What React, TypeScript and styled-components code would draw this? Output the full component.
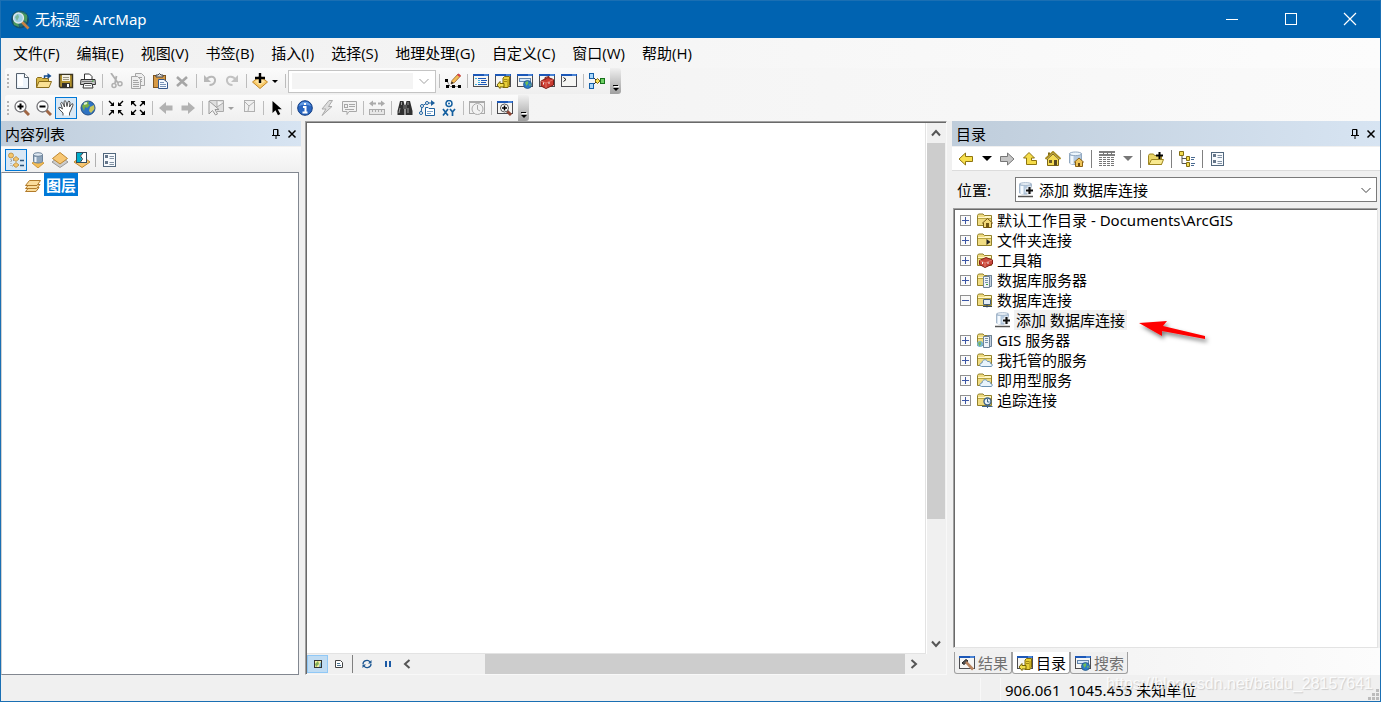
import React from "react";
import styled, { createGlobalStyle, css } from "styled-components";

const GlobalStyle = createGlobalStyle`
  * { box-sizing: border-box; }
  html, body { margin: 0; padding: 0; }
  body {
    font-family: "Noto Sans", "Noto Sans CJK SC", sans-serif;
    font-size: 15px;
    line-height: 20px;
    color: #000;
    background: #f0f0f0;
  }
  button, select { font: inherit; color: inherit; }
`;

/* ---------- icon artwork ---------- */

const folderBase = (
  <>
    <path d="M.5 13.5V3.5L1.5 2H6L7.5 3.5H14.5V13.5Z" fill="#f0dc82" stroke="#92802a" />
    <path d="M1 5.5H14M8 4.5H14" stroke="#fff6c4" />
    <path d="M1 6.5H14" stroke="#b8a440" />
  </>
);

const windowBase = (
  <>
    <rect x=".5" y="1.5" width="15" height="12" fill="#f6f6f4" stroke="#4c4c50" />
    <rect x="0" y="1" width="16" height="2" fill="#1c58b8" />
    <path d="M11 2H15" stroke="#7ab0f0" />
  </>
);

const icons = {
  newFile: (
    <>
      <path d="M2.5.5H10.5L14.5 4.5V15.5H2.5Z" fill="#eef5fc" stroke="#55606c" />
      <path d="M4 2H9V13H4Z" fill="#fff" />
      <path d="M10.5.5V4.5H14.5" fill="#fff" stroke="#55606c" />
    </>
  ),
  open: (
    <>
      <path d="M.5 14.5V5.5L1.5 4.5H5.5L6.5 5.5H12.5V8" fill="#d9b94a" stroke="#8a6d1b" />
      <path d="M.5 14.5L3 8.5H15.5L13 14.5Z" fill="#fbe295" stroke="#8a6d1b" />
      <path d="M8.5 5V3H12" fill="none" stroke="#144d91" strokeWidth="1.4" />
      <path d="M11.500 0L15.5 3L11.500 6Z" fill="#144d91" />
    </>
  ),
  save: (
    <>
      <path d="M1.5 1.5H14.5V14.5H2.5L1.5 13.5Z" fill="#b0912e" stroke="#3a3423" strokeWidth="1.4" />
      <rect x="4" y="2" width="8" height="6" fill="#f3efe2" />
      <path d="M5 4.5H11M5 6.5H11" stroke="#9b9683" />
      <rect x="4" y="10" width="8" height="5" fill="#34312b" />
      <rect x="9" y="11" width="2" height="3" fill="#fff" />
    </>
  ),
  print: (
    <>
      <path d="M4.500 6V1H9.500L12 3.500V6" fill="#fff" stroke="#333" />
      <path d="M1 6.500H15L15.500 11.500H.5Z" fill="#c9c9c9" stroke="#333" />
      <path d="M2 8.500H13" stroke="#777" />
      <rect x="12" y="7.500" width="2" height="1" fill="#3c9f3c" />
      <path d="M4 10.500H12L13 15H3Z" fill="#fff" stroke="#333" />
      <path d="M5 12.500H11" stroke="#888" />
    </>
  ),
  cut: (
    <g fill="none" stroke="#b0b0b0">
      <path d="M3 0L10 10M8.500 3L7 10" strokeWidth="1.8" />
      <circle cx="6" cy="12.500" r="2" strokeWidth="1.500" />
      <circle cx="12" cy="10.800" r="2" strokeWidth="1.500" />
    </g>
  ),
  copy: (
    <g fill="#eee" stroke="#a5a5a5">
      <path d="M5.500.5H11.500L14.500 3.500V12.500H5.500Z" />
      <path d="M7.500 4.500H12M7.500 6.500H12M7.500 8.500H12" />
      <path d="M1.500 3.500H7.500L10.500 6.500V15.500H1.500Z" />
      <path d="M3 7.500H8M3 9.500H9M3 11.500H9M3 13.500H9" />
    </g>
  ),
  paste: (
    <>
      <rect x="1.500" y="2.500" width="12" height="12" fill="#d79a45" stroke="#7d5420" />
      <path d="M4 4V2H6L7.500.5L9 2H11V4Z" fill="#ddd" stroke="#444" />
      <path d="M6.500 6.500H12L15.500 9.500V15.500H6.500Z" fill="#f6faff" stroke="#37588a" />
      <path d="M8 9.500H12M8 11.500H14M8 13.500H14" stroke="#7a94b8" />
    </>
  ),
  remove: <path d="M3 4L13 13M13 4L3 13" stroke="#a6a6a6" strokeWidth="2.600" />,
  undo: (
    <>
      <path d="M4 7C7 2 14 3 13 8C12.500 10.500 10.500 12 7.500 12" fill="none" stroke="#b8b8b8" strokeWidth="2" />
      <path d="M2 2V9H9Z" fill="#b8b8b8" />
    </>
  ),
  redo: (
    <>
      <path d="M12 7C9 2 2 3 3 8C3.500 10.500 5.500 12 8.500 12" fill="none" stroke="#c2c2c2" strokeWidth="2" />
      <path d="M14 2V9H7Z" fill="#c2c2c2" />
    </>
  ),
  addData: (
    <>
      <path d="M8 3L15.500 9L8 15.500L.5 9Z" fill="#f8c968" stroke="#c28828" />
      <path d="M3 8.500L8 5L13 8.500L8 12Z" fill="#fde3a2" />
      <path d="M8 0V10M3 5H13" stroke="#000" strokeWidth="2.400" />
    </>
  ),
  editor: (
    <>
      <path d="M1.500 7L5 13.500H14" fill="none" stroke="#333" strokeDasharray="1 1" />
      <path d="M0 6h3v3H0zM1 12h3v3H1zM7 12h3v3H7zM13 12h3v3h-3z" fill="#000" />
      <path d="M6 11L7 7.500L13 1L15.500 3L9.500 9.500Z" fill="#f3bd55" stroke="#94612b" strokeWidth=".8" />
      <path d="M12 2L13.500.5L16 2.500L14.500 4Z" fill="#d8414a" />
      <path d="M6 11L6.700 8.500L8.500 10Z" fill="#222" />
    </>
  ),
  contents: (
    <>
      {windowBase}
      <path d="M2 5.500H4M5 7.500H7M5 9.500H7M2 11.500H4" stroke="#3bb0e0" />
      <path d="M5 5.500H13M8 7.500H14M8 9.500H13M5 11.500H14" stroke="#1c58b8" />
    </>
  ),
  catalogWin: (
    <>
      {windowBase}
      <path d="M8 5L9.500 3.500H14.500V12L13 14.500H8Z" fill="#e8cf38" stroke="#806a08" />
      <path d="M13 6V14M9 6.500H12M9 8.500H12" stroke="#a18712" />
      <path d="M2 12L5 8.500V10.500H9V14H5V15.500Z" fill="#f2df51" stroke="#756003" />
    </>
  ),
  searchWin: (
    <>
      {windowBase}
      <rect x="2.500" y="5.500" width="11" height="3" fill="#d6e8fa" stroke="#6185ad" />
      <circle cx="10.500" cy="11.500" r="4" fill="#2a7bc8" stroke="#285780" strokeWidth=".8" />
      <path d="M8 9.500L10.500 8L11.500 10L9.500 13ZM11.500 12L13.500 10.500V13Z" fill="#70be56" />
    </>
  ),
  toolboxWin: (
    <>
      {windowBase}
      <path d="M2 8L9 4.500L14.500 6.500V12L7 15.500L2 13Z" fill="#c93b31" stroke="#7d1913" />
      <path d="M2 8L7 10L14.500 6.500M7 10V15" fill="none" stroke="#f08b7c" strokeWidth=".7" />
      <path d="M6 7V4.500L10 3.500V5" fill="none" stroke="#7d1913" />
      <path d="M4.500 9.500V11.500M10 9V11" stroke="#eee" />
    </>
  ),
  pythonWin: (
    <>
      {windowBase}
      <path d="M2.500 4.500L5 6.500L2.500 8.500" fill="none" stroke="#111" />
    </>
  ),
  model: (
    <>
      <path d="M3 3L8 8H12M3 13L8 8" fill="none" stroke="#333" />
      <rect x=".5" y=".5" width="4" height="5" fill="#a9d7fb" stroke="#145fa8" />
      <rect x=".5" y="10.500" width="4" height="5" fill="#a9d7fb" stroke="#145fa8" />
      <path d="M8.500 5.500L11 8L8.500 10.500L6 8Z" fill="#fae25a" stroke="#7f6a0e" />
      <rect x="11.500" y="5.500" width="4" height="5" fill="#6fd065" stroke="#17721a" />
    </>
  ),
  zoomIn: (
    <>
      <path d="M10 10L15 15" stroke="#a06644" strokeWidth="3" />
      <circle cx="6.500" cy="6.500" r="5.500" fill="#fff" stroke="#77777b" strokeWidth="1.300" />
      <path d="M3.500 6.500H9.500M6.500 3.500V9.500" stroke="#000" strokeWidth="2" />
    </>
  ),
  zoomOut: (
    <>
      <path d="M10 10L15 15" stroke="#a06644" strokeWidth="3" />
      <circle cx="6.500" cy="6.500" r="5.500" fill="#fff" stroke="#77777b" strokeWidth="1.300" />
      <path d="M3.500 6.500H9.500" stroke="#000" strokeWidth="2" />
    </>
  ),
  pan: (
    <path
      d="M5 15.500V13L1 9L.7 7.700L2 7.200L4.500 9L2.700 3.300L3.500 2.300L4.700 3L6.500 7L6 1.500L7 .6L8 1.500L9 6.500L10 1.700L11 1L12 2L11.500 7L13.500 4L14.700 3.700L15 5L13 10L11.500 13V15.500"
      fill="#fff"
      stroke="#3c3c3c"
      strokeWidth=".9"
    />
  ),
  globe: (
    <>
      <circle cx="8" cy="8" r="7" fill="#2e73c3" stroke="#254f83" />
      <path d="M2 6L5 2L9 1.500L8 4L10 5L7 8L5 7L4 11Z" fill="#79ad43" />
      <path d="M10 7L14 5L14.500 9L11 13L9 11Z" fill="#c9c65a" />
      <path d="M4 4L7 3" stroke="#def4d0" strokeWidth="2" />
    </>
  ),
  fixedIn: (
    <g fill="#000" stroke="#000" strokeWidth="1.400">
      <path d="M1 1L5 5M15 1L11 5M1 15L5 11M15 15L11 11" />
      <path d="M6 2V6H2ZM10 2V6H14ZM6 14V10H2ZM10 14V10H14Z" strokeWidth="0" />
    </g>
  ),
  fixedOut: (
    <g fill="#000" stroke="#000" strokeWidth="1.400">
      <path d="M2 2L6 6M14 2L10 6M2 14L6 10M14 14L10 10" />
      <path d="M1 1H5.500L1 5.500ZM15 1H10.500L15 5.500ZM1 15H5.500L1 10.500ZM15 15H10.500L15 10.500Z" strokeWidth="0" />
    </g>
  ),
  back: <path d="M1 8L8 2V5.500H14.500V10.500H8V14Z" fill="#b2b2b2" />,
  forward: <path d="M15 8L8 2V5.500H1.500V10.500H8V14Z" fill="#b2b2b2" />,
  select: (
    <>
      <path d="M1.500.5H15.500V11.500H9M9 1V7L15 3" fill="#dedede" stroke="#aaa" />
      <path d="M1 1V14L4.500 10.500L7.500 15L9.500 14L7 9.500H11Z" fill="#eee" stroke="#999" />
    </>
  ),
  clear: (
    <g fill="#f0f0f0" stroke="#b0b0b0">
      <rect x="3.500" y=".5" width="10" height="11" />
      <path d="M4 2L8 6L13 2M8 6L7 11" fill="none" />
    </g>
  ),
  pointer: <path d="M3.500 1V13L6.500 10.200L9 15.200L11.300 14L8.700 9.300H12.800Z" fill="#000" />,
  identify: (
    <>
      <circle cx="8" cy="8" r="7.300" fill="#2a66c0" stroke="#103c83" />
      <path d="M2 6C3 1 12 0 14 6C10 4 6 4 2 6Z" fill="#659de5" />
      <path d="M8 3V5M6 7H8.500V12M5.500 12.500H10.500" fill="none" stroke="#fff" strokeWidth="2" />
    </>
  ),
  bolt: <path d="M10 .5L3 9H7L3 15.500L13 6.500H9.500L13.500.5Z" fill="#ddd" stroke="#aaa" />,
  popup: (
    <g fill="#f2f2f2" stroke="#a8a8a8">
      <path d="M1.500 1.500H15.500V11.500H8L6 14.500V11.500H1.500Z" />
      <rect x="3.500" y="4.500" width="3" height="3" />
      <path d="M8 4.500H14M8 6.500H14M4 9.500H13" />
    </g>
  ),
  measure: (
    <g fill="none" stroke="#ababab">
      <path d="M2 3.500H7M9 3.500H14" strokeWidth="2" />
      <path d="M0 3.500L4 .5V6.500ZM16 3.500L12 .5V6.500Z" fill="#ababab" strokeWidth="0" />
      <rect x=".5" y="9.500" width="15" height="5" fill="#e7e7e7" />
      <path d="M3.500 10V12M6.500 10V12M9.500 10V12M12.500 10V12" />
    </g>
  ),
  find: (
    <>
      <path d="M3 1H6.500L7.500 5V15H.5V11ZM9.500 1H13L15.500 11V15H8.500V5Z" fill="#303030" />
      <path d="M3 8L2 13M11 8V13M4.500 2V5M11 2V5" stroke="#9a9a9a" />
      <rect x="6" y="5" width="4" height="4" fill="#555" />
    </>
  ),
  route: (
    <g fill="#fff" stroke="#1d609e">
      <path d="M2 13L3 6L8 3H13" fill="none" />
      <path d="M12 0L16 3L12 6Z" fill="#1d609e" strokeWidth="0" />
      <circle cx="2" cy="13" r="1.500" />
      <circle cx="3" cy="6" r="1.500" />
      <circle cx="8" cy="3" r="1.500" />
      <path d="M6.500 7.500H9L10 8.500H15.500V15.500H6.500Z" />
      <path d="M8 11.500H14M8 13.500H12" stroke="#7aa3cb" />
    </g>
  ),
  goToXY: (
    <>
      <circle cx="8" cy="3.500" r="3" fill="#fff" stroke="#145f9f" strokeWidth="1.500" />
      <circle cx="8" cy="3.500" r="1" fill="#145f9f" />
      <path d="M2 9L7 15.500M7 9L2 15.500M9 9L11.500 12L14 9M11.500 12V16" fill="none" stroke="#145f9f" strokeWidth="1.700" />
    </>
  ),
  time: (
    <g fill="#f2f2f2" stroke="#aaa">
      <rect x=".5" y="1.500" width="15" height="12" />
      <path d="M0 2H16" strokeWidth="2" />
      <circle cx="8.500" cy="9" r="5.500" />
      <path d="M8.500 5V9.500L11 11" fill="none" />
    </g>
  ),
  viewer: (
    <>
      {windowBase}
      <path d="M10 11L14 15" stroke="#8f4635" strokeWidth="3" />
      <circle cx="7.500" cy="8" r="4" fill="#fff" stroke="#555" />
      <path d="M5 8H10M7.500 5.500V10.500" stroke="#000" strokeWidth="1.500" />
    </>
  ),
  drawOrder: (
    <>
      <path d="M3 7V14H8M3 8.500H7" fill="none" stroke="#999" strokeDasharray="1 1" />
      <g fill="#f5c66c" stroke="#b98a3b" strokeWidth=".8">
        <circle cx="3" cy="3.500" r="2.500" />
        <path d="M8 4.500L11 7L8 9.500L5 7ZM8 10.500L11 13L8 15.500L5 13Z" />
      </g>
      <path d="M12 8.500H16M12 13.500H16" stroke="#2b5379" strokeWidth="1.600" />
    </>
  ),
  source: (
    <>
      <path d="M8 16L2 11L8 8L14 11Z" fill="#f3bd55" stroke="#c28a2f" strokeWidth=".8" />
      <path d="M3.500 2.500V9.500C5 11.500 11 11.500 12.500 9.500V2.500Z" fill="#8fa5bb" stroke="#6c8298" />
      <ellipse cx="8" cy="2.500" rx="4.500" ry="1.800" fill="#dfe9f3" stroke="#6c8298" />
      <path d="M5.500 5V10" stroke="#ebf3fa" strokeWidth="2" />
    </>
  ),
  visibility: (
    <>
      <path d="M8 4L16 10L8 15.500L0 10Z" fill="#ccc" stroke="#999" />
      <path d="M8 .5L15.500 6.500L8 12L.5 6.500Z" fill="#f7c773" stroke="#bd8731" />
    </>
  ),
  selection: (
    <>
      <path d="M8 4L16 10L8 15.500L0 10Z" fill="#f7c773" stroke="#bd8731" />
      <rect x="2.500" y=".5" width="10" height="10" fill="#fff" stroke="#334b5c" />
      <path d="M3 1H9L6 4L8 7L6 10H3Z" fill="#00aecb" />
      <path d="M9 1L6.500 4L8.500 7L6.500 10" fill="none" stroke="#263b49" />
    </>
  ),
  options: (
    <>
      <rect x="1.500" y="1.500" width="12" height="13" fill="#f7fafd" stroke="#51677d" />
      <path d="M3 3h3v3H3zM3 9h3v3H3z" fill="#65768a" />
      <path d="M7.500 4.500H12M7.500 6.500H12M7.500 10.500H12M7.500 12.500H12" stroke="#8292a4" />
    </>
  ),
  layers: (
    <g fill="#fbdc9b" stroke="#b27b2a">
      <path d="M.5 14.500L4 10.500H14L11 14.500Z" />
      <path d="M.5 11.500L4 7.500H15L11.500 11.500Z" />
      <path d="M.5 8.500L4.500 3.500H15.500L12 8.500Z" />
    </g>
  ),
  yellowBack: <path d="M1 8L7.500 2V5.500H14.500V10.500H7.500V14Z" fill="#f7df4c" stroke="#8e740f" />,
  grayForward: <path d="M15 8L8.500 2V5.500H1.500V10.500H8.500V14Z" fill="#c5c5c5" stroke="#777" />,
  upLevel: <path d="M7 1.500L1.500 7H4.500V13.500H14.500V9.500H9.500V7H12.500Z" fill="#f5dc49" stroke="#8e740f" />,
  home: (
    <>
      <path d="M2.500 8V14.500H13.500V8L8 3Z" fill="#f4db54" stroke="#7e6713" />
      <path d="M4 5V1.500" stroke="#7e6713" strokeWidth="2" />
      <path d="M.5 8L8 1L15.500 8" fill="none" stroke="#a88c22" strokeWidth="2" />
      <rect x="9" y="9" width="3" height="5.500" fill="#574922" />
      <rect x="4" y="9" width="3" height="3" fill="#6b5a2a" />
    </>
  ),
  homeDb: (
    <>
      <path d="M1.500 2.500V12C3 14 12 14 13.500 12V2.500Z" fill="#b4c9df" stroke="#91a8c0" />
      <ellipse cx="7.500" cy="2.800" rx="6" ry="1.800" fill="#edf6fd" stroke="#91a8c0" />
      <path d="M4 5V13" stroke="#f2f8fd" strokeWidth="3" />
      <path d="M6.500 11L11 7L15.500 11H14.500V15.500H7.500V11Z" fill="#efc457" stroke="#8b6216" />
      <rect x="10" y="12" width="2" height="3" fill="#6b4a13" />
    </>
  ),
  tableGrid: (
    <>
      <path d="M0 1H16M0 4H16" stroke="#555" strokeWidth="1.400" />
      <path d="M0 6.500H16M0 8.500H16M0 10.500H16M0 12.500H16M0 14.500H16" stroke="#777" strokeDasharray="3 1" />
      <path d="M4.500 1V4M8.500 1V4M12.500 1V4" stroke="#777" />
    </>
  ),
  connectFolder: (
    <>
      <path d="M.5 13.500V4.500L1.500 3H5.500L6.500 4.500H13.500V13.500Z" fill="#e9d468" stroke="#9c8420" />
      <path d="M1 13.500L3.500 8.500H15.500L13.500 13.500Z" fill="#f8e98f" stroke="#9c8420" />
      <path d="M11.500 1V8M8 4.500H15" stroke="#000" strokeWidth="2" />
    </>
  ),
  treeView: (
    <>
      <path d="M3 4V12.500H8M3 7.500H8" fill="none" stroke="#555" />
      <path d="M.5.5h4v4h-4zM7.500 5.500h3v4h-3zM7.500 11.500h3v4h-3z" fill="#f2dc50" stroke="#846e12" />
      <path d="M12 6.500H16M12 8.500H15M12 12.500H16M12 14.500H15" stroke="#4b6b91" />
    </>
  ),
  addDb: (
    <>
      <path d="M1.500 2V11C3 12.500 12 12.500 13.500 11V2Z" fill="#b5c9de" stroke="#a3b6ca" />
      <ellipse cx="7.500" cy="2" rx="6" ry="1.300" fill="#f4f9fd" stroke="#a3b6ca" />
      <path d="M4 4V12" stroke="#f5faff" strokeWidth="3" />
      <path d="M0 14.500H15" stroke="#555" strokeWidth="1.500" />
      <path d="M11.500 4.500V12.500M7.500 8.500H15.500" stroke="#fff" strokeWidth="4" />
      <path d="M11.500 5V12M8 8.500H15" stroke="#111" strokeWidth="2.200" />
    </>
  ),
  folderHome: (
    <>
      {folderBase}
      <path d="M5.500 11L10.500 6.500L15.500 11H14.500V15.500H6.500V11Z" fill="#f2d979" stroke="#715712" />
      <rect x="9" y="11" width="3" height="4" fill="#725813" />
    </>
  ),
  folderLink: (
    <>
      {folderBase}
      <path d="M9.500 7L13.500 10L9.500 13Z" fill="#222" />
    </>
  ),
  folderToolbox: (
    <>
      {folderBase}
      <path d="M2.500 8.500L9 5.500L15.500 8V12L8 15.500L2.500 12.500Z" fill="#c9473c" stroke="#832019" />
      <path d="M3 8.500L8 11L15 8M8 11V15" fill="none" stroke="#ed9385" strokeWidth=".7" />
      <path d="M5.500 10V12M11 10V12" stroke="#eee" />
    </>
  ),
  folderServer: (
    <>
      {folderBase}
      <path d="M10.500 3.500H14.500V14.500H10.500Z" fill="#c3d1df" stroke="#6d8298" />
      <path d="M6.500 4.500H12.500V15.500H6.500Z" fill="#eef3f8" stroke="#6d8298" />
      <path d="M8 6.500H11M8 8.500H11M8 10.500H11" stroke="#7a94ae" />
      <rect x="9" y="12" width="2" height="1" fill="#3ea63e" />
    </>
  ),
  folderDb: (
    <>
      {folderBase}
      <path d="M6.500 7.500V12.500H13.500V7.500Z" fill="#e3ecf5" stroke="#46627e" />
      <path d="M6 14.500H15M10 12.500V15.500" stroke="#34495d" />
    </>
  ),
  folderGis: (
    <>
      {folderBase}
      <path d="M10.500 3.500H14.500V14.500H10.500Z" fill="#c3d1df" stroke="#6d8298" />
      <path d="M6.500 4.500H12.500V15.500H6.500Z" fill="#eef3f8" stroke="#6d8298" />
      <path d="M8 6.500H11M8 8.500H11M8 10.500H11" stroke="#7a94ae" />
      <circle cx="3" cy="12" r="3" fill="#74b6d4" />
      <path d="M1 11L3.500 9.500L4 12L2.500 14.500Z" fill="#7cb85a" />
    </>
  ),
  folderCloud: (
    <>
      {folderBase}
      <path d="M4.500 14.500C2 14 2.500 11 5 11C5 7.500 9.500 6.500 10.500 9.500C13 9 14 11 13.500 11.500C16 12 15.500 14.500 14 14.500Z" fill="#e8f3fb" stroke="#6b92b4" />
    </>
  ),
  folderTrack: (
    <>
      {folderBase}
      <circle cx="10.500" cy="9.500" r="3.500" fill="#e9f3fb" stroke="#3f6488" strokeWidth="1.400" />
      <path d="M10.500 7V10H12.500M5 14.500H15.500M10.500 13V16" fill="none" stroke="#3f6488" />
    </>
  ),
  resultWin: (
    <>
      {windowBase}
      <path d="M3 8L7 4.500L9 6L5 9.500Z" fill="#555" stroke="#222" />
      <path d="M7 7L14 14.500" stroke="#b98560" strokeWidth="2.600" />
    </>
  ),
  dataView: (
    <>
      <rect x="4.500" y="4.500" width="7" height="7" fill="#f4f0a3" stroke="#333" />
      <path d="M5 8L8 5L9 8L6 11Z" fill="#81ae57" />
      <path d="M9 11L10 7L11 6V11Z" fill="#7cb9d5" />
    </>
  ),
  layoutView: (
    <>
      <path d="M4.500 4.500H9.500L11.500 6.500V11.500H4.500Z" fill="#fff" stroke="#444" />
      <path d="M6 7.500H9M6 9.500H10" stroke="#4a718e" />
    </>
  ),
  refresh: (
    <>
      <path d="M4 8C4 4.500 9 3 11 6M12 8C12 11.500 7 13 5 10" fill="none" stroke="#1b5692" strokeWidth="1.300" />
      <path d="M12.500 4V7.500H9ZM3.500 12V8.500H7Z" fill="#1b5692" />
    </>
  ),
  pause: <path d="M5 5H7V11H5ZM9 5H11V11H9Z" fill="#1b5aa5" />,
  left: <path d="M10.500 4L6 8L10.500 12" fill="none" stroke="#555" strokeWidth="2" />,
  right: <path d="M5.500 4L10 8L5.500 12" fill="none" stroke="#555" strokeWidth="2" />,
  up: <path d="M4 10.500L8 6L12 10.500" fill="none" stroke="#555" strokeWidth="2" />,
  down: <path d="M4 5.500L8 10L12 5.500" fill="none" stroke="#555" strokeWidth="2" />,
  chevron: <path d="M3.500 6L8 10.500L12.500 6" fill="none" stroke="currentColor" />,
  pin: <path d="M5.500 9V3.500H10V9M9.500 4V9M4 9.500H12M8 10V13" fill="none" stroke="#000" />,
  close: <path d="M4.500 4.500L11.500 11.500M11.500 4.500L4.500 11.500" stroke="#000" strokeWidth="1.500" />,
};

type IconName = keyof typeof icons;

const Svg = styled.svg`
  display: block;
  flex: none;
  width: 16px;
  height: 16px;
`;

const Icon = ({ name }: { name: IconName }) => (
  <Svg viewBox="0 0 16 16" aria-hidden="true">
    {icons[name]}
  </Svg>
);

/* ---------- window frame ---------- */

const Window = styled.div`
  display: flex;
  flex-direction: column;
  min-height: 100vh;
  border: 1px solid #1a6fb3;
  background: #f0f0f0;
`;

const TitleBar = styled.header`
  display: flex;
  align-items: center;
  height: 37px;
  padding-left: 9px;
  gap: 5px;
  background: #0063b1;
  color: #fff;
`;

const Title = styled.h1`
  flex: 1;
  margin: 0;
  padding-bottom: 2px;
  font-size: 15px;
  font-weight: 400;
`;

const AppLogo = styled.svg`
  width: 20px;
  height: 20px;
`;

const CaptionButton = styled.button`
  display: grid;
  place-items: center;
  width: 53px;
  height: 37px;
  padding: 0 0 2px;
  border: 0;
  background: none;
`;

const CaptionButtons = styled.div`
  display: flex;
  gap: 6px;
  padding-right: 4px;
`;

const CaptionGlyph = styled.svg`
  width: 14px;
  height: 14px;
  fill: none;
  stroke: #fff;
`;

const MenuBar = styled.nav`
  display: flex;
  align-items: center;
  height: 30px;
  padding: 0 0 1px 12px;
  gap: 17px;
  background: linear-gradient(90deg, #f0f0f0, #fcfcfc);
`;

const MenuLink = styled.a`
  color: #000;
  font-family: "Open Sans", "Noto Sans CJK SC", sans-serif;
  text-decoration: none;
  white-space: nowrap;
`;

/* ---------- toolbars ---------- */

const ToolbarArea = styled.div`
  display: grid;
  gap: 1px;
  background: linear-gradient(90deg, #f0f0f0, #fafafa);
`;

const ToolbarRow = styled.div`
  display: flex;
  align-items: center;
  height: 26px;
  padding-left: 4px;
`;

const ToolbarStrip = styled.div`
  display: flex;
  align-items: center;
  height: 26px;
  padding-right: 2px;
  border-radius: 3px 0 0 3px;
  background: linear-gradient(#fbfbfb, #efefef);
`;

const Grip = styled.span`
  width: 2px;
  height: 14px;
  margin: 0 2px;
  background: repeating-linear-gradient(#b4b4b4 0 2px, transparent 2px 4px);
`;

const ToolButton = styled.button<{ $on?: boolean }>`
  display: grid;
  place-items: center;
  width: 22px;
  height: 22px;
  padding: 0;
  border: 1px solid ${(p) => (p.$on ? "#0078d7" : "transparent")};
  background: ${(p) => (p.$on ? "#d9e8f5" : "none")};
`;

const Divider = styled.span<{ $dark?: boolean }>`
  flex: none;
  width: 1px;
  height: ${(p) => (p.$dark ? "18px" : "14px")};
  margin: ${(p) => (p.$dark ? "0 3px" : "0 2px 0 3px")};
  background: ${(p) => (p.$dark ? "#808080" : "#bcbcbc")};
`;

const MenuArrow = styled.button<{ $tone?: string; $wide?: boolean }>`
  display: grid;
  place-items: center;
  width: ${(p) => (p.$wide ? "17px" : "11px")};
  height: 22px;
  padding: ${(p) => (p.$wide ? "0" : "0 3px 0 0")};
  border: 0;
  background: none;
  &::before {
    content: "";
    border: ${(p) => (p.$wide ? "5px" : "3px")} solid transparent;
    border-top-color: ${(p) => p.$tone ?? "#000"};
    border-bottom: 0;
  }
`;

const ScaleBox = styled.div`
  display: flex;
  align-items: center;
  width: 148px;
  height: 23px;
  padding: 3px;
  gap: 3px;
  border: 1px solid #c4c4c4;
  background: #fff;
  color: #a0a0a0;
`;

const ScaleSelect = styled.select`
  flex: 1;
  height: 16px;
  border: 0;
  padding: 0;
  appearance: none;
  background: #f0f0f0;
`;

const Overflow = styled.button`
  display: flex;
  align-items: flex-end;
  justify-content: center;
  width: 11px;
  height: 26px;
  padding: 0 0 3px;
  border: 0;
  border-radius: 0 3px 3px 0;
  background: linear-gradient(#f0f0f0, #a0a0a0);
  svg { width: 6px; height: 7px; }
`;

/* ---------- docked panels ---------- */

const Workspace = styled.main`
  display: flex;
  flex: 1;
`;

const SidePanel = styled.section<{ $side: "left" | "right" }>`
  display: flex;
  flex-direction: column;
  flex: none;
  width: ${(p) => (p.$side === "left" ? "300px" : "428px")};
`;

const PanelHeader = styled.div`
  display: flex;
  align-items: center;
  height: 25px;
  margin-bottom: 1px;
  padding: 0 1px 0 4px;
  background: linear-gradient(90deg, #bfcddb, #d7e4f2);
`;

const PanelTitle = styled.h2`
  flex: 1;
  margin: 0;
  font-size: 15px;
  font-weight: 400;
`;

const HeaderButton = styled.button`
  padding: 0;
  border: 0;
  background: none;
`;

const PanelTools = styled.div<{ $white?: boolean }>`
  display: flex;
  align-items: center;
  gap: ${(p) => (p.$white ? "1px" : "0")};
  height: ${(p) => (p.$white ? "23px" : "25px")};
  padding-left: ${(p) => (p.$white ? "3px" : "4px")};
  background: ${(p) => (p.$white ? "#fff" : "linear-gradient(#fbfbfb, #f0f0f0)")};
`;

const PanelDivider = styled.span`
  width: 1px;
  height: 14px;
  margin: 0 3px 0 2px;
  background: #b0b0b0;
`;

const ContentsTree = styled.div`
  flex: 1;
  margin-right: 2px;
  border: 1px solid #828790;
  border-left-color: #d0d0d0;
  padding-left: 23px;
  background: #fff;
`;

const LayerItem = styled.div`
  display: flex;
  align-items: center;
  gap: 3px;
`;

const LayerName = styled.button`
  height: 23px;
  padding: 0 1px;
  border: 1px solid #0078d7;
  background: #0078d7;
  color: #fff;
  font-weight: 700;
  line-height: 20px;
`;

/* ---------- map view ---------- */

const MapFrame = styled.section`
  display: flex;
  flex-direction: column;
  flex: 1;
  min-width: 0;
  margin: 0 5px 0 4px;
  border: 1px solid;
  border-color: #a0a0a0 #f8f8f8 #f8f8f8 #a0a0a0;
  box-shadow: inset 1px 1px 0 #696969;
  padding: 1px 1px 0 1px;
`;

const MapBody = styled.div`
  display: flex;
  flex: 1;
`;

const MapCanvas = styled.div`
  flex: 1;
  border-right: 1px solid #e3e3e3;
  border-bottom: 1px solid #e3e3e3;
  background: #fff;
`;

const ScrollBar = styled.div<{ $vertical?: boolean }>`
  display: flex;
  flex-direction: ${(p) => (p.$vertical ? "column" : "row")};
  background: #f0f0f0;
  ${(p) => (p.$vertical ? css`width: 19px; border-left: 1px solid #fff;` : css`flex: 1;`)}
`;

const ScrollButton = styled.button`
  display: grid;
  place-items: center;
  width: 18px;
  height: 20px;
  padding: 0;
  border: 0;
  background: #f0f0f0;
`;

const ScrollSpan = styled.span<{ $size: number; $thumb?: boolean }>`
  flex: ${(p) => p.$size};
  background: ${(p) => (p.$thumb ? "#cdcdcd" : "transparent")};
`;

const MapFooter = styled.div`
  display: flex;
  align-items: center;
  height: 20px;
  padding-right: 22px;
`;

const ViewButton = styled.button<{ $on?: boolean }>`
  display: grid;
  place-items: center;
  width: 21px;
  height: 18px;
  padding: 0;
  border: 1px solid ${(p) => (p.$on ? "#90c8f6" : "transparent")};
  background: ${(p) => (p.$on ? "#c0dcf3" : "none")};
`;

/* ---------- catalog ---------- */

const LocationRow = styled.div`
  display: flex;
  align-items: center;
  height: 38px;
  padding: 0 3px 0 5px;
  border-top: 1px solid #dcdcdc;
`;

const LocationLabel = styled.label`
  width: 58px;
`;

const LocationBox = styled.div`
  display: flex;
  align-items: center;
  flex: 1;
  height: 25px;
  padding: 0 2px;
  gap: 5px;
  border: 1px solid #7a7a7a;
  background: #fff;
  color: #444;
`;

const LocationSelect = styled.select`
  flex: 1;
  height: 22px;
  padding: 0;
  border: 0;
  background: none;
  color: #000;
  appearance: none;
`;

const CatalogTree = styled.ul`
  flex: 1;
  margin: 0 2px 0 1px;
  padding: 1px 0 0 6px;
  list-style: none;
  border: 1px solid;
  border-color: #a0a0a0 #e3e3e3 #e3e3e3 #a0a0a0;
  box-shadow: inset 1px 1px 0 #696969;
  background: #fff;
`;

const TreeRow = styled.li<{ $child?: boolean }>`
  position: relative;
  display: flex;
  align-items: center;
  height: 20px;
  padding-left: ${(p) => (p.$child ? "35px" : "0")};
`;

const Toggle = styled.button`
  width: 11px;
  height: 11px;
  margin-right: 6px;
  padding: 0;
  border: 0;
  background: none;
  svg { display: block; width: 11px; height: 11px; }
`;

const TreeLabel = styled.span<{ $selected?: boolean }>`
  margin-left: ${(p) => (p.$selected ? "3px" : "4px")};
  padding: ${(p) => (p.$selected ? "0 2px" : "0")};
  background: ${(p) => (p.$selected ? "#f0f0f0" : "none")};
  white-space: pre;
`;

const Pointer = styled.svg`
  position: absolute;
  left: 174px;
  top: 0;
  width: 80px;
  height: 36px;
`;

const Tabs = styled.div`
  display: flex;
  height: 27px;
  padding: 4px 0 0 2px;
  background: linear-gradient(90deg, #f0f0f0, #fcfcfc);
`;

const Tab = styled.button<{ $on?: boolean }>`
  display: flex;
  align-items: center;
  gap: 3px;
  width: 58px;
  height: 22px;
  padding: 0 4px;
  border: 1px solid #a0a0a0;
  border-top: 0;
  border-radius: 0 0 3px 3px;
  background: ${(p) => (p.$on ? "#fff" : "#f0f0f0")};
  color: ${(p) => (p.$on ? "#000" : "#707070")};
  white-space: nowrap;
`;

/* ---------- status bar ---------- */

const StatusBar = styled.footer`
  position: relative;
  display: flex;
  justify-content: flex-end;
  align-items: stretch;
  height: 26px;
  padding-top: 3px;
`;

const StatusCell = styled.div<{ $width: number }>`
  width: ${(p) => p.$width}px;
  padding: 2px 0 0 4px;
  border-left: 1px solid #f8f8f8;
  white-space: pre;
`;

const Watermark = styled.span`
  position: absolute;
  right: 7px;
  top: -1px;
  font-family: "Liberation Sans", Arial, sans-serif;
  font-size: 16px;
  color: rgba(255, 255, 255, 0.85);
  text-shadow: 1px 1px 1px rgba(0, 0, 0, 0.15);
`;

const SizeGrip = styled.svg`
  position: absolute;
  right: 1px;
  bottom: 1px;
  width: 11px;
  height: 11px;
`;

/* ---------- data ---------- */

type ToolItem = IconName | "|";

const standardTools: ToolItem[] = [
  "newFile", "open", "save", "print", "|", "cut", "copy", "paste", "remove", "|",
  "undo", "redo", "|", "addData",
];
const windowTools: ToolItem[] = [
  "|", "editor", "|", "contents", "catalogWin", "searchWin", "toolboxWin", "pythonWin", "|", "model",
];
const navTools: ToolItem[] = [
  "zoomIn", "zoomOut", "pan", "globe", "|", "fixedIn", "fixedOut", "|", "back", "forward", "|", "select",
];
const queryTools: ToolItem[] = [
  "clear", "|", "pointer", "|", "identify", "bolt", "popup", "|", "measure", "|",
  "find", "route", "goToXY", "|", "time", "|", "viewer",
];

const menus = [
  "文件(F)", "编辑(E)", "视图(V)", "书签(B)", "插入(I)", "选择(S)",
  "地理处理(G)", "自定义(C)", "窗口(W)", "帮助(H)",
];

const catalog: { icon: IconName; label: string; open?: boolean; child?: boolean }[] = [
  { icon: "folderHome", label: "默认工作目录 - Documents\\ArcGIS" },
  { icon: "folderLink", label: "文件夹连接" },
  { icon: "folderToolbox", label: "工具箱" },
  { icon: "folderServer", label: "数据库服务器" },
  { icon: "folderDb", label: "数据库连接", open: true },
  { icon: "addDb", label: "添加 数据库连接", child: true },
  { icon: "folderGis", label: "GIS 服务器" },
  { icon: "folderCloud", label: "我托管的服务" },
  { icon: "folderCloud", label: "即用型服务" },
  { icon: "folderTrack", label: "追踪连接" },
];

const Tools = ({ items, active }: { items: ToolItem[]; active?: IconName }) => (
  <>
    {items.map((item, i) =>
      item === "|" ? (
        <Divider key={i} />
      ) : (
        <ToolButton key={i} type="button" aria-label={item} $on={item === active}>
          <Icon name={item} />
        </ToolButton>
      )
    )}
  </>
);

const OverflowButton = () => (
  <Overflow type="button" aria-label="更多">
    <svg viewBox="0 0 6 7" aria-hidden="true">
      <path d="M0 1.500H5" stroke="#000" />
      <path d="M1 2.500H6" stroke="#fff" />
      <path d="M0 4H6L3 7Z" fill="#000" />
    </svg>
  </Overflow>
);

const PanelBar = ({ title }: { title: string }) => (
  <PanelHeader>
    <PanelTitle>{title}</PanelTitle>
    <HeaderButton type="button" aria-label="固定"><Icon name="pin" /></HeaderButton>
    <HeaderButton type="button" aria-label="关闭"><Icon name="close" /></HeaderButton>
  </PanelHeader>
);

export default function App() {
  return (
    <>
      <GlobalStyle />
      <Window>
        <TitleBar>
          <AppLogo viewBox="0 0 20 20" aria-hidden="true">
            <circle cx="10" cy="9.500" r="9" fill="#164e6c" />
            <path d="M3 4L8 1L15 2L18 7L16 14L11 17L4 14Z" fill="#226a74" />
            <path d="M11 2L17 5V12L13 10ZM3 11L8 13L9 17L4 15Z" fill="#4d9a5e" />
            <path d="M12 12L18.500 18.500" stroke="#c98243" strokeWidth="2.600" />
            <circle cx="8.500" cy="8" r="5" fill="#9fcfe4" stroke="#dfe8ee" strokeWidth="1.300" />
            <path d="M5 7L8 4L9 7L7 11Z" fill="#7ab99b" />
          </AppLogo>
          <Title>无标题 - ArcMap</Title>
          <CaptionButtons>
            <CaptionButton type="button" aria-label="最小化">
              <CaptionGlyph viewBox="0 0 14 14"><path d="M1 7.500H13" /></CaptionGlyph>
            </CaptionButton>
            <CaptionButton type="button" aria-label="最大化">
              <CaptionGlyph viewBox="0 0 14 14"><rect x="1.500" y="1.500" width="11" height="11" /></CaptionGlyph>
            </CaptionButton>
            <CaptionButton type="button" aria-label="关闭">
              <CaptionGlyph viewBox="0 0 14 14"><path d="M1 1L13 13M13 1L1 13" strokeWidth="1.200" /></CaptionGlyph>
            </CaptionButton>
          </CaptionButtons>
        </TitleBar>

        <MenuBar>
          {menus.map((m) => (
            <MenuLink key={m} href="#">{m}</MenuLink>
          ))}
        </MenuBar>

        <ToolbarArea>
          <ToolbarRow>
            <ToolbarStrip>
              <Grip />
              <Tools items={standardTools} />
              <MenuArrow type="button" aria-label="添加数据选项" />
              <Divider />
              <ScaleBox>
                <ScaleSelect disabled aria-label="比例尺" />
                <Icon name="chevron" />
              </ScaleBox>
              <Tools items={windowTools} />
            </ToolbarStrip>
            <OverflowButton />
          </ToolbarRow>
          <ToolbarRow>
            <ToolbarStrip>
              <Grip />
              <Tools items={navTools} active="pan" />
              <MenuArrow type="button" aria-label="选择选项" $tone="#a0a0a0" />
              <Tools items={queryTools} />
            </ToolbarStrip>
            <OverflowButton />
          </ToolbarRow>
        </ToolbarArea>

        <Workspace>
          <SidePanel $side="left">
            <PanelBar title="内容列表" />
            <PanelTools>
              <ToolButton type="button" aria-label="按绘制顺序列出" $on><Icon name="drawOrder" /></ToolButton>
              <ToolButton type="button" aria-label="按源列出"><Icon name="source" /></ToolButton>
              <ToolButton type="button" aria-label="按可见性列出"><Icon name="visibility" /></ToolButton>
              <ToolButton type="button" aria-label="按选择列出"><Icon name="selection" /></ToolButton>
              <PanelDivider />
              <ToolButton type="button" aria-label="选项"><Icon name="options" /></ToolButton>
            </PanelTools>
            <ContentsTree>
              <LayerItem>
                <Icon name="layers" />
                <LayerName type="button">图层</LayerName>
              </LayerItem>
            </ContentsTree>
          </SidePanel>

          <MapFrame>
            <MapBody>
              <MapCanvas />
              <ScrollBar $vertical>
                <ScrollButton type="button" aria-label="向上"><Icon name="up" /></ScrollButton>
                <ScrollSpan $size={377} $thumb />
                <ScrollSpan $size={115} />
                <ScrollButton type="button" aria-label="向下"><Icon name="down" /></ScrollButton>
              </ScrollBar>
            </MapBody>
            <MapFooter>
              <ViewButton type="button" aria-label="数据视图" $on><Icon name="dataView" /></ViewButton>
              <ViewButton type="button" aria-label="布局视图"><Icon name="layoutView" /></ViewButton>
              <Divider $dark />
              <ViewButton type="button" aria-label="刷新"><Icon name="refresh" /></ViewButton>
              <ViewButton type="button" aria-label="暂停"><Icon name="pause" /></ViewButton>
              <ScrollBar>
                <ScrollButton type="button" aria-label="向左"><Icon name="left" /></ScrollButton>
                <ScrollSpan $size={69} />
                <ScrollSpan $size={418} $thumb />
                <ScrollButton type="button" aria-label="向右"><Icon name="right" /></ScrollButton>
              </ScrollBar>
            </MapFooter>
          </MapFrame>

          <SidePanel $side="right">
            <PanelBar title="目录" />
            <PanelTools $white>
              <ToolButton type="button" aria-label="后退"><Icon name="yellowBack" /></ToolButton>
              <MenuArrow type="button" aria-label="历史" $wide />
              <ToolButton type="button" aria-label="前进"><Icon name="grayForward" /></ToolButton>
              <ToolButton type="button" aria-label="上一级"><Icon name="upLevel" /></ToolButton>
              <ToolButton type="button" aria-label="主目录"><Icon name="home" /></ToolButton>
              <ToolButton type="button" aria-label="默认地理数据库"><Icon name="homeDb" /></ToolButton>
              <Divider $dark />
              <ToolButton type="button" aria-label="内容视图"><Icon name="tableGrid" /></ToolButton>
              <MenuArrow type="button" aria-label="视图选项" $wide $tone="#777" />
              <Divider $dark />
              <ToolButton type="button" aria-label="连接到文件夹"><Icon name="connectFolder" /></ToolButton>
              <Divider $dark />
              <ToolButton type="button" aria-label="切换目录树"><Icon name="treeView" /></ToolButton>
              <Divider $dark />
              <ToolButton type="button" aria-label="选项"><Icon name="options" /></ToolButton>
            </PanelTools>
            <LocationRow>
              <LocationLabel htmlFor="location">位置:</LocationLabel>
              <LocationBox>
                <Icon name="addDb" />
                <LocationSelect id="location">
                  <option>添加 数据库连接</option>
                </LocationSelect>
                <Icon name="chevron" />
              </LocationBox>
            </LocationRow>
            <CatalogTree>
              {catalog.map(({ icon, label, open, child }) => (
                <TreeRow key={label} $child={child}>
                  {!child && (
                    <Toggle type="button" aria-label={open ? "折叠" : "展开"}>
                      <svg viewBox="0 0 11 11" aria-hidden="true">
                        <rect x=".5" y=".5" width="10" height="10" fill="#fafafa" stroke="#919191" />
                        <path d={open ? "M2 5.500H9" : "M2 5.500H9M5.500 2V9"} stroke="#3c56a5" />
                      </svg>
                    </Toggle>
                  )}
                  <Icon name={icon} />
                  <TreeLabel $selected={child}>{label}</TreeLabel>
                  {child && (
                    <Pointer viewBox="0 0 80 36" aria-hidden="true">
                      <defs>
                        <filter id="soft" x="-20%" y="-30%" width="150%" height="180%">
                          <feDropShadow dx="2" dy="3" stdDeviation="2" floodColor="#000" floodOpacity=".5" />
                        </filter>
                      </defs>
                      <path
                        d="M5 13L33 11L29 16L71 26V29L28 21L28 26Z"
                        fill="#f00"
                        filter="url(#soft)"
                      />
                    </Pointer>
                  )}
                </TreeRow>
              ))}
            </CatalogTree>
            <Tabs>
              <Tab type="button"><Icon name="resultWin" />结果</Tab>
              <Tab type="button" $on><Icon name="catalogWin" />目录</Tab>
              <Tab type="button"><Icon name="searchWin" />搜索</Tab>
            </Tabs>
          </SidePanel>
        </Workspace>

        <StatusBar>
          <StatusCell $width={20} />
          <StatusCell $width={380}>906.061  1045.455 未知单位</StatusCell>
          <Watermark>https://blog.csdn.net/baidu_28157641</Watermark>
          <SizeGrip viewBox="0 0 11 11" aria-hidden="true">
            <path d="M8 0h3v3H8zM8 4h3v3H8zM4 4h3v3H4zM8 8h3v3H8zM4 8h3v3H4zM0 8h3v3H0z" fill="#bcbcbc" />
          </SizeGrip>
        </StatusBar>
      </Window>
    </>
  );
}
